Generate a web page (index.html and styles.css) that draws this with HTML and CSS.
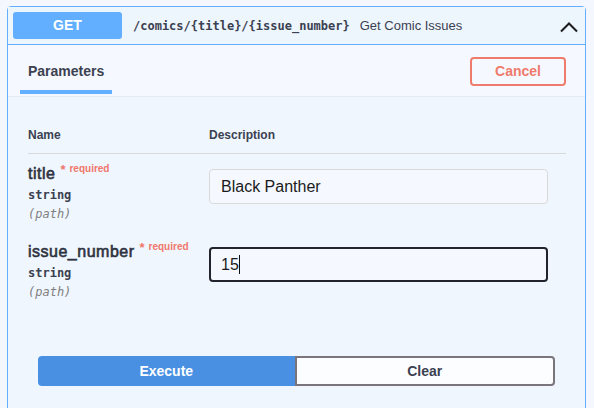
FILE: index.html
```html
<!DOCTYPE html>
<html>
<head>
<meta charset="utf-8">
<link rel="stylesheet" href="styles.css">
</head>
<body>
<div class="opblock">
  <div class="summary">
    <span class="method">GET</span>
    <span class="path">/comics/{title}/{issue_number}</span>
    <span class="desc">Get Comic Issues</span>
    <svg class="chevron" width="20" height="12" viewBox="0 0 20 12"><path d="M2 10.5 L10 2.5 L18 10.5" fill="none" stroke="#1d1d1d" stroke-width="2"/></svg>
  </div>
  <div class="section-header">
    <div class="tab">Parameters</div>
    <button class="btn cancel">Cancel</button>
  </div>
  <div class="params">
    <div class="row head">
      <div class="col-name">Name</div>
      <div class="col-desc">Description</div>
    </div>
    <div class="row param">
      <div class="col-name">
        <div class="pname">title<span class="req"><span class="star">*</span>required</span></div>
        <div class="ptype">string</div>
        <div class="pin">(path)</div>
      </div>
      <div class="col-desc">
        <div class="input filled">Black Panther</div>
      </div>
    </div>
    <div class="row param">
      <div class="col-name">
        <div class="pname">issue_number<span class="req"><span class="star">*</span>required</span></div>
        <div class="ptype">string</div>
        <div class="pin">(path)</div>
      </div>
      <div class="col-desc">
        <div class="input focus">15<span class="caret"></span></div>
      </div>
    </div>
    <div class="actions">
      <button class="btn execute">Execute</button>
      <button class="btn clear">Clear</button>
    </div>
  </div>
</div>
</body>
</html>
```
FILE: styles.css
```css
html, body {
  margin: 0;
  padding: 0;
  background: #f4f8fe;
  font-family: "Liberation Sans", Arial, sans-serif;
  color: #3b4151;
}
.opblock {
  margin: 6px 8px 0 7px;
  border: 1px solid #61affe;
  border-radius: 4px 4px 0 0;
  background: #eff6fe;
  height: 420px;
  box-sizing: border-box;
}
.summary {
  display: flex;
  align-items: center;
  padding: 5px;
  height: 38px;
  box-sizing: border-box;
  border-bottom: 1px solid #61affe;
  background: #edf5fd;
}
.method {
  width: 109px;
  height: 27px;
  line-height: 27px;
  background: #61affe;
  color: #fff;
  font-weight: bold;
  font-size: 14px;
  text-align: center;
  border-radius: 3px;
}
.path {
  margin-left: 11px;
  font-family: "DejaVu Sans Mono", monospace;
  font-size: 12px;
  font-weight: 600;
  color: #3b4151;
}
.desc {
  margin-left: 10px;
  font-size: 13px;
  color: #3b4151;
}
.chevron {
  margin-left: auto;
  margin-right: 1px;
  margin-top: 3px;
}
.section-header {
  display: flex;
  align-items: center;
  justify-content: space-between;
  height: 52px;
  box-sizing: border-box;
  padding: 0 19px 0 12px;
  background: #f5f9ff;
  border-bottom: 1px solid #e3ecf4;
}
.tab {
  align-self: stretch;
  display: flex;
  align-items: center;
  box-sizing: border-box;
  width: 92px;
  padding-left: 8px;
  padding-top: 7px;
  font-size: 14px;
  font-weight: bold;
  color: #3b4151;
  border-bottom: 4px solid #61affe;
  margin-bottom: 2px;
}
.btn {
  font-family: "Liberation Sans", Arial, sans-serif;
  font-size: 14px;
  font-weight: bold;
  border-radius: 4px;
  background: transparent;
  cursor: pointer;
}
.cancel {
  width: 96px;
  height: 29px;
  border: 2px solid #ef7b6c;
  color: #ef7b6c;
  padding: 0;
  margin-top: 1px;
}
.params {
  padding: 0 19px 0 20px;
}
.row {
  display: grid;
  grid-template-columns: 181px 1fr;
}
.row.head {
  padding-top: 31px;
  height: 57px;
  box-sizing: border-box;
  font-size: 12px;
  font-weight: bold;
  line-height: 15px;
  border-bottom: 1px solid #d9dadb;
}
.row.head .col-desc { padding-right: 0; }
.row.param {
  padding: 10px 0 8px;
}
.pname {
  font-size: 16px;
  font-weight: normal;
  letter-spacing: 0.5px;
  -webkit-text-stroke: 0.6px #2e3240;
  line-height: 20px;
  color: #2e3240;
}
.req {
  font-size: 10px;
  font-weight: bold;
  letter-spacing: 0;
  -webkit-text-stroke: 0;
  color: #f0776a;
  position: relative;
  top: -7px;
  margin-left: 5px;
}
.star {
  font-size: 13px;
  margin-right: 4px;
  position: relative;
  top: 2px;
}
.ptype {
  font-family: "DejaVu Sans Mono", monospace;
  font-size: 12px;
  font-weight: 600;
  line-height: 19px;
}
.pin {
  font-family: "DejaVu Sans Mono", monospace;
  font-size: 12px;
  font-style: italic;
  color: #808080;
  line-height: 19px;
}
.col-desc {
  padding-right: 18px;
}
.input {
  margin-top: 5px;
  height: 35px;
  box-sizing: border-box;
  border-radius: 4px;
  font-size: 16px;
  display: flex;
  align-items: center;
  color: #1b1b1b;
  background: #f5f9ff;
}
.input.filled {
  border: 1px solid #d9d9d9;
  padding-left: 11px;
}
.input.focus {
  border: 2px solid #23232e;
  padding-left: 10px;
}
.caret {
  display: inline-block;
  width: 1px;
  height: 19px;
  background: #111;
}
.actions {
  display: flex;
  margin: 46px 11px 0 10px;
}
.execute {
  flex: 1;
  height: 30px;
  border: none;
  background: #4990e2;
  color: #fff;
  border-radius: 4px 0 0 4px;
}
.clear {
  flex: 1;
  height: 30px;
  border: 2px solid #7a747c;
  color: #3b4151;
  background: #fcfdff;
  border-radius: 0 4px 4px 0;
}
```
